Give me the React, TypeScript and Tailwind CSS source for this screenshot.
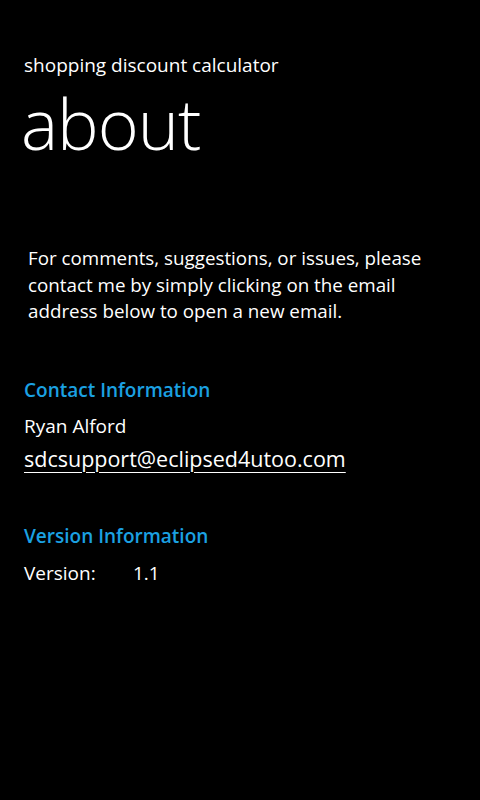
export default function App() {
  return (
    <div
      className="w-[480px] h-[800px] bg-black text-white overflow-hidden"
      style={{ fontFamily: '"Open Sans", "Noto Sans", sans-serif' }}
    >
      <div className="pl-6 pt-[51px]">
        <div className="text-[19px] leading-[28px]">shopping discount calculator</div>
        <div className="text-[70px] leading-[80px] font-light -ml-[3px] mt-[4px] tracking-[-1px]">about</div>
      </div>

      <div className="pl-6 pr-6 mt-[82px]">
        <p className="pl-1 text-[18.8px] leading-[26.5px]">
          For comments, suggestions, or issues, please contact me by simply clicking on the
          email address below to open a new email.
        </p>

        <div className="mt-[51px] flex flex-col">
          <div className="text-[19px] leading-[28px] font-semibold text-[#1ba1e2]">Contact Information</div>
          <div className="mt-[8px] text-[19px] leading-[28px]">Ryan Alford</div>
          <a className="mt-[4px] text-[21.5px] leading-[30px] underline underline-offset-[5px] decoration-1">
            sdcsupport@eclipsed4utoo.com
          </a>
        </div>

        <div className="mt-[48px] flex flex-col">
          <div className="text-[19px] leading-[28px] font-semibold text-[#1ba1e2]">Version Information</div>
          <div className="mt-[9px] flex text-[19px] leading-[28px]">
            <span className="w-[109px]">Version:</span>
            <span>1.1</span>
          </div>
        </div>
      </div>
    </div>
  );
}
